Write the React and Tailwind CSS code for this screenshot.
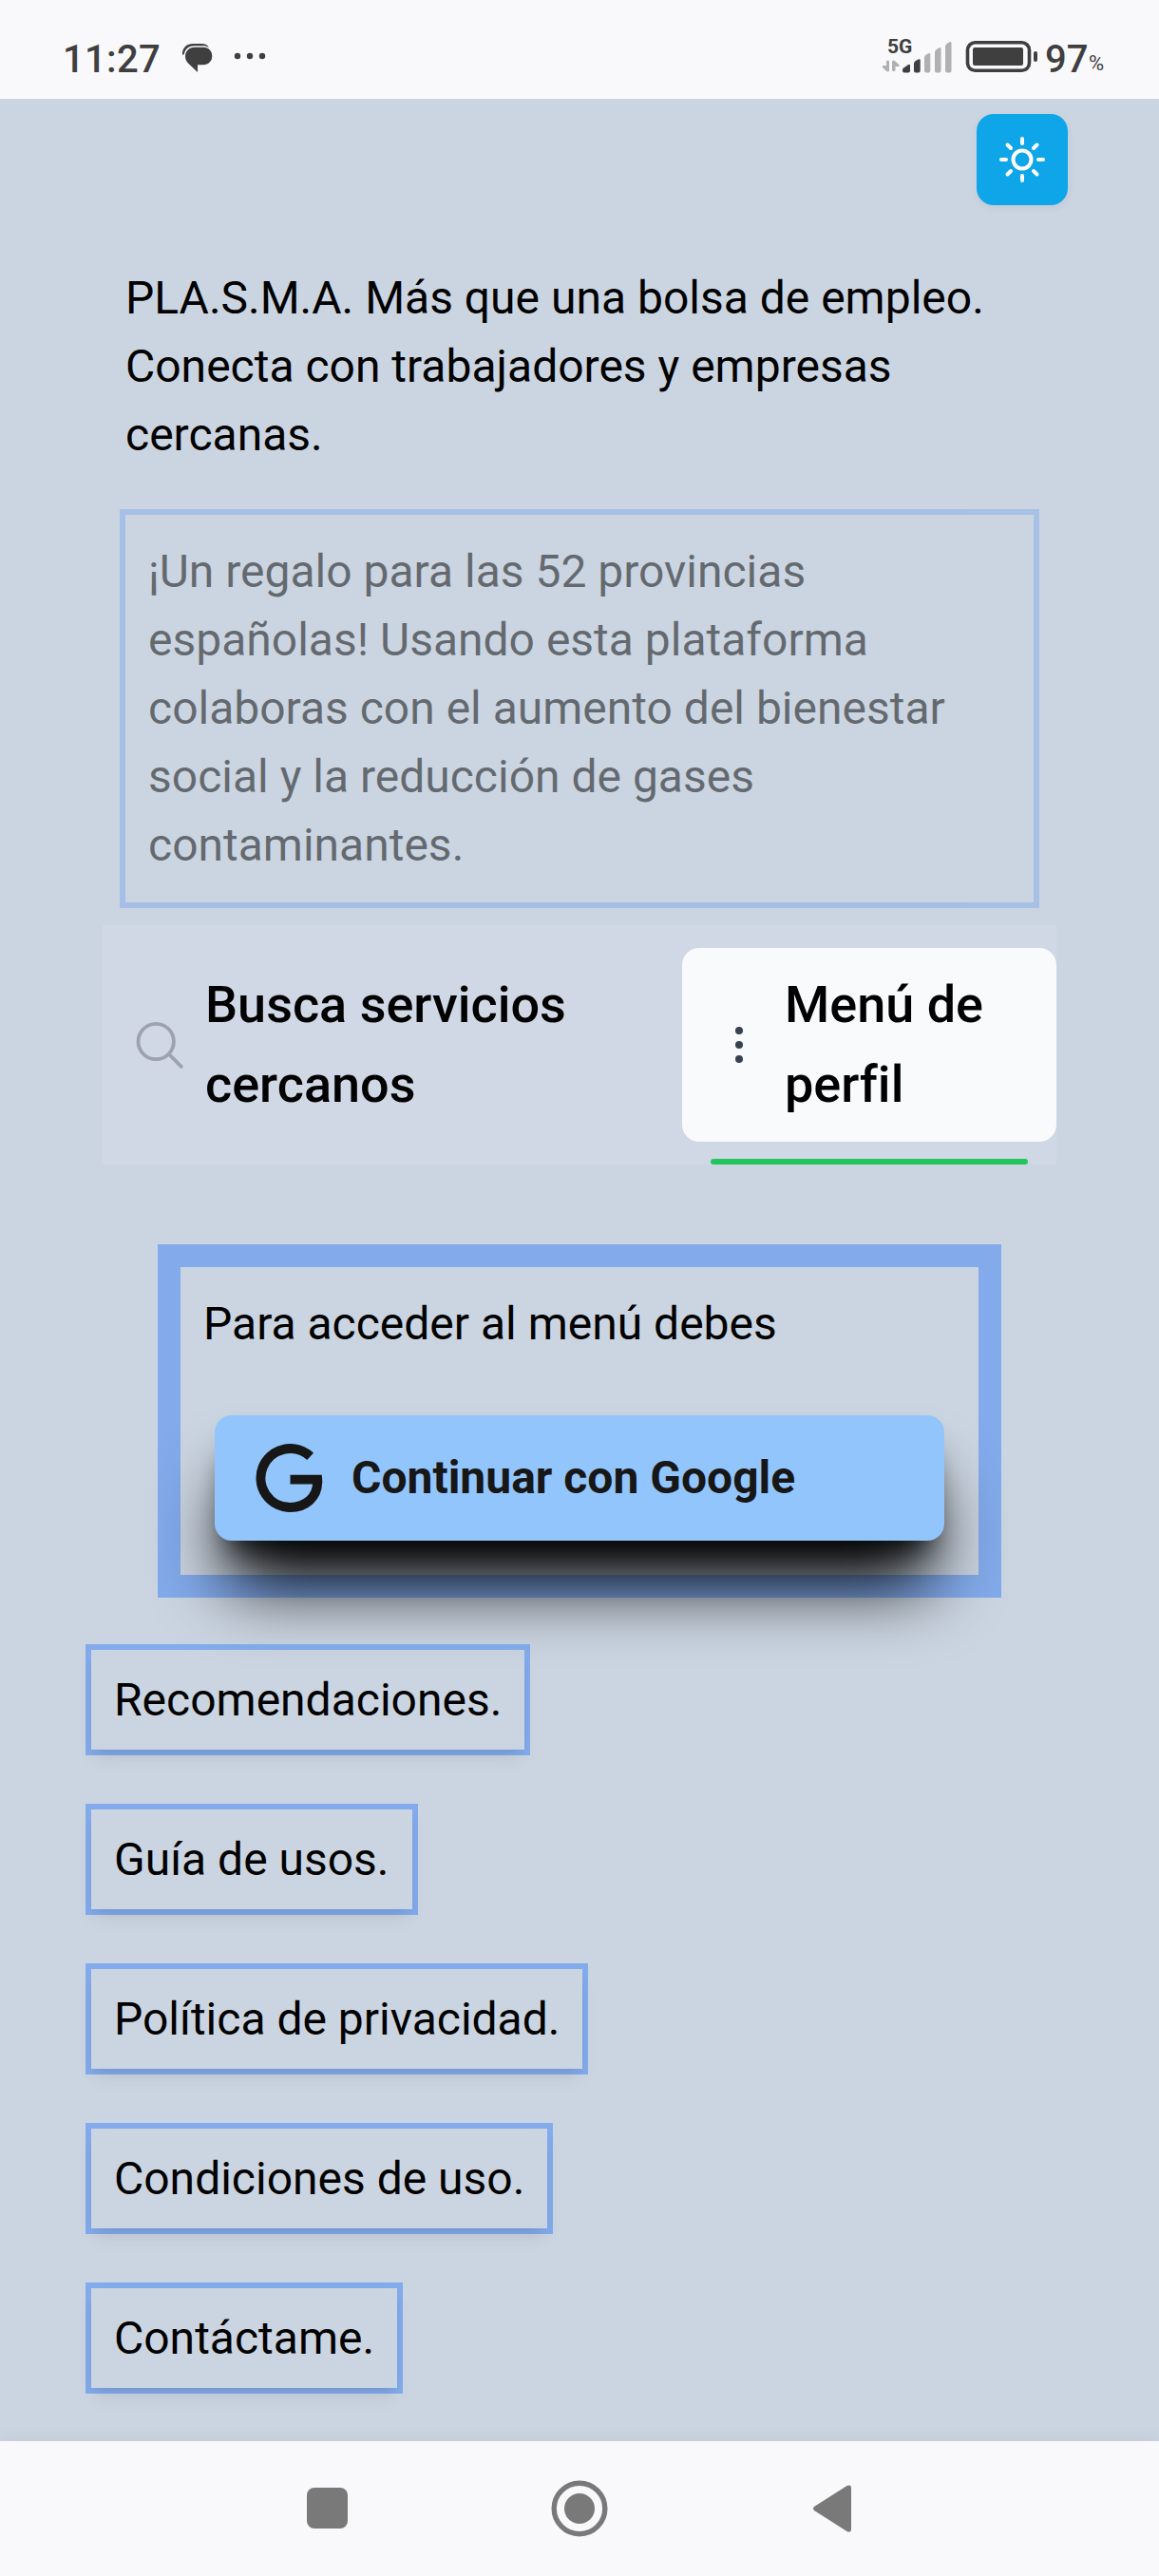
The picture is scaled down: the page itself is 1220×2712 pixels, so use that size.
const links = [
  'Recomendaciones.',
  'Guía de usos.',
  'Política de privacidad.',
  'Condiciones de uso.',
  'Contáctame.',
];

function StatusBar() {
  return (
    <header className="flex h-[104px] shrink-0 items-start bg-[#f9f9fc] pl-[66px] pr-[56px] pt-[38px] text-[#3f3f3f]">
      <span className="mt-[1px] w-[102px] text-[40px] font-medium leading-[47px] tracking-[0.3px]">11:27</span>
      <svg className="ml-[24px] mt-[8px] h-[30px] w-[32px]" viewBox="0 0 32 30" fill="currentColor">
        <path d="M0 12C-.5 5 4 0 11 0h9c4 0 6.500 1.500 8 4-2-1.200-4-1.700-6-1.700H12.500C7 2.300 3 5.500 1.800 11z" />
        <path d="M12.500 3.800h10c5 0 8.800 4 8.800 9.200s-4 9.200-9 9.200H16V30L6.500 21C4 18.500 3 16 3 13.200 3 8 7.300 3.800 12.500 3.800z" />
      </svg>
      <svg className="ml-[22px] mt-[17px] h-[8px] w-[34px]" viewBox="0 0 34 8" fill="currentColor">
        <circle cx="4" cy="4" r="3.200" />
        <circle cx="17" cy="4" r="3.200" />
        <circle cx="30" cy="4" r="3.200" />
      </svg>
      <div className="ml-auto flex items-start">
        <div className="flex w-[74px] flex-col">
          <span className="-mt-[1px] h-[20px] pl-[5px] text-[21px] font-bold leading-[25px]">5G</span>
          <svg className="-mt-[14px] h-[34px] w-[74px]" viewBox="0 0 74 34">
            <g fill="#b0b0b0">
              <path d="M4 22q0-1.500 1.500-1.500T7 22v9q0 1.500-1.500 1.500-.8 0-1.500-.7L0 28v-2h4zM10 22q0-1.500 1.500-1.500.8 0 1.500.7l4.500 4V27h-4v3.500q0 1.700-1.700 1.700T10 30.500z" />
              <path d="M44 17.500q0-2 2-3l2.500-1.300q1.800-.8 1.800 1V31.500q0 2-2 2H46q-2 0-2-2z" />
              <path d="M55 12q0-2 2-3l2.500-1.700q2-.8 2 1.200v23q0 2-2 2H57q-2 0-2-2z" />
              <path d="M66 6q0-2 2-3.200l2.300-1.500Q72.500.5 72.500 2.500v29q0 2-2 2H68q-2 0-2-2z" />
            </g>
            <g fill="#3f3f3f">
              <path d="M21 30.500q0-1.200 1.500-2.300l4.500-3q2-1 2 1v5.300q0 2-2 2h-4q-2 0-2-2z" />
              <path d="M33 24q0-2 2-3l2.700-1.500q2-1 2 1v11q0 2-2 2H35q-2 0-2-2z" />
            </g>
          </svg>
        </div>
        <svg className="ml-[13px] mt-[5px] h-[34px] w-[76px]" viewBox="0 0 76 34">
          <rect x="2.500" y="1.800" width="65" height="29.500" rx="8" fill="none" stroke="#3f3f3f" strokeWidth="3.600" />
          <rect x="8" y="7" width="53" height="19" rx="2" fill="#3f3f3f" />
          <rect x="72" y="11" width="4" height="11" rx="2" fill="#3f3f3f" />
        </svg>
        <span className="ml-[8px] mt-[1px] w-[46px] text-[40px] font-medium leading-[47px]">97</span>
        <span className="mt-[16px] w-[18px] text-[22px] leading-[25px]">%</span>
      </div>
    </header>
  );
}

function SunIcon() {
  return (
    <svg className="h-[48px] w-[48px]" viewBox="0 0 48 48" fill="none" stroke="white" strokeWidth="4" strokeLinecap="round">
      <circle cx="24" cy="24" r="9.500" />
      <path d="M24 2v5M24 41v5M2 24h5M41 24h5M8.500 8.500l3.500 3.500M36 36l3.500 3.500M39.500 8.500L36 12M12 36l-3.500 3.500" />
    </svg>
  );
}

function GoogleIcon() {
  return (
    <svg className="h-[72px] w-[72px]" viewBox="0 0 72 72" fill="none" stroke="#171717" strokeWidth="10">
      <path d="M58.600 13.300A31 31 0 1 0 37.500 67C54 67 66.200 56 66.200 40" />
      <path d="M37.500 32.700h33.200q.6 3.500.5 7.500l-.3 2.300H37.500z" fill="#171717" stroke="none" />
    </svg>
  );
}

function Tabs() {
  return (
    <nav className="mx-[108px] mt-[18px] flex h-[252px] bg-[#d0d7e5] text-[54px] font-medium leading-[84px] text-black [font-variant-ligatures:none]">
      <div className="flex w-[610px] items-center pl-[35px]">
        <svg className="h-[50px] w-[50px] shrink-0" viewBox="0 0 50 50" fill="none" stroke="#9ca3af" strokeWidth="3.800" strokeLinecap="round">
          <circle cx="21.200" cy="21.500" r="18.700" />
          <path d="M35 35l12.800 12.800" />
        </svg>
        <div className="ml-[23px] w-[400px]">Busca servicios cercanos</div>
      </div>
      <div className="flex flex-1 flex-col items-center justify-between pt-[24px]">
        <div className="flex h-[204px] w-full items-center rounded-[18px] bg-slate-50 pl-[56px]">
          <svg className="h-[40px] w-[8px] shrink-0" viewBox="0 0 8 40" fill="#374151">
            <circle cx="4" cy="5" r="4" />
            <circle cx="4" cy="20" r="4" />
            <circle cx="4" cy="35" r="4" />
          </svg>
          <div className="ml-[44px] w-[240px]">Menú de perfil</div>
        </div>
        <div className="h-[6px] w-[334px] rounded-[3px] bg-[#22c55e]" />
      </div>
    </nav>
  );
}

function LoginPanel() {
  return (
    <section className="ml-[166px] mt-[84px] flex h-[372px] w-[888px] flex-col border-[24px] border-[#3b82f6]/50 px-[24px] pt-[24px]">
      <p>Para acceder al menú debes</p>
      <button className="ml-[12px] mt-[60px] flex h-[132px] w-[768px] items-center rounded-[18px] bg-[#93c5fd] pl-[42px] text-left font-bold text-[#171717] shadow-[0_60px_75px_-15px_#000,0_24px_30px_-18px_#000]">
        <GoogleIcon />
        <span className="ml-[30px]">Continuar con Google</span>
      </button>
    </section>
  );
}

function NavigationBar() {
  return (
    <footer className="relative flex h-[142px] shrink-0 items-start bg-[#f9f9fc] pl-[323px] pt-[40px] shadow-[0_0_24px_rgba(0,0,0,0.06)]">
      <div className="mt-[9px] h-[43px] w-[43px] rounded-[8px] bg-[#797979]" />
      <svg className="ml-[214px] h-[62px] w-[60px]" viewBox="0 0 60 62" fill="#797979">
        <circle cx="30" cy="31" r="26.800" fill="none" stroke="#797979" strokeWidth="5.400" />
        <circle cx="30" cy="31" r="16" />
      </svg>
      <svg className="ml-[216px] h-[62px] w-[40px]" viewBox="0 0 40 62" fill="#797979">
        <path d="M1 29L35.500 7Q40 5 40 9.500v43Q40 57 35.500 55L1 33Q-1 31 1 29z" />
      </svg>
    </footer>
  );
}

export default function App() {
  return (
    <div className="flex h-[2712px] w-[1220px] flex-col overflow-hidden bg-[#cbd5e1] font-['Roboto',sans-serif] text-[48px] leading-[72px] text-black">
      <StatusBar />
      <main className="flex min-h-0 flex-1 flex-col">
        <div className="flex justify-end pr-[96px] pt-[16px]">
          <button className="flex h-[96px] w-[96px] items-center justify-center rounded-[18px] bg-[#0ea5e9] shadow-[0_3px_9px_rgba(0,0,0,0.06)]">
            <SunIcon />
          </button>
        </div>
        <p className="ml-[132px] mt-[62px] w-[956px]">
          PLA.S.M.A. Más que una bolsa de empleo. Conecta con trabajadores y empresas cercanas.
        </p>
        <div className="ml-[126px] mt-[42px] w-[968px] border-[6px] border-[#3b82f6]/50 p-[24px] opacity-50">
          ¡Un regalo para las 52 provincias españolas! Usando esta plataforma colaboras con el aumento del bienestar social y la reducción de gases contaminantes.
        </div>
        <Tabs />
        <LoginPanel />
        <ul className="ml-[90px] mt-[49px] flex flex-col items-start gap-[51px]">
          {links.map((label) => (
            <li key={label} className="border-[6px] border-[#3b82f6]/50">
              <a className="block h-[105px] px-[24px] pt-[17px] shadow-[0_12px_18px_-3px_rgba(0,0,0,0.08),0_6px_12px_-6px_rgba(0,0,0,0.08)]">{label}</a>
            </li>
          ))}
        </ul>
      </main>
      <NavigationBar />
    </div>
  );
}
